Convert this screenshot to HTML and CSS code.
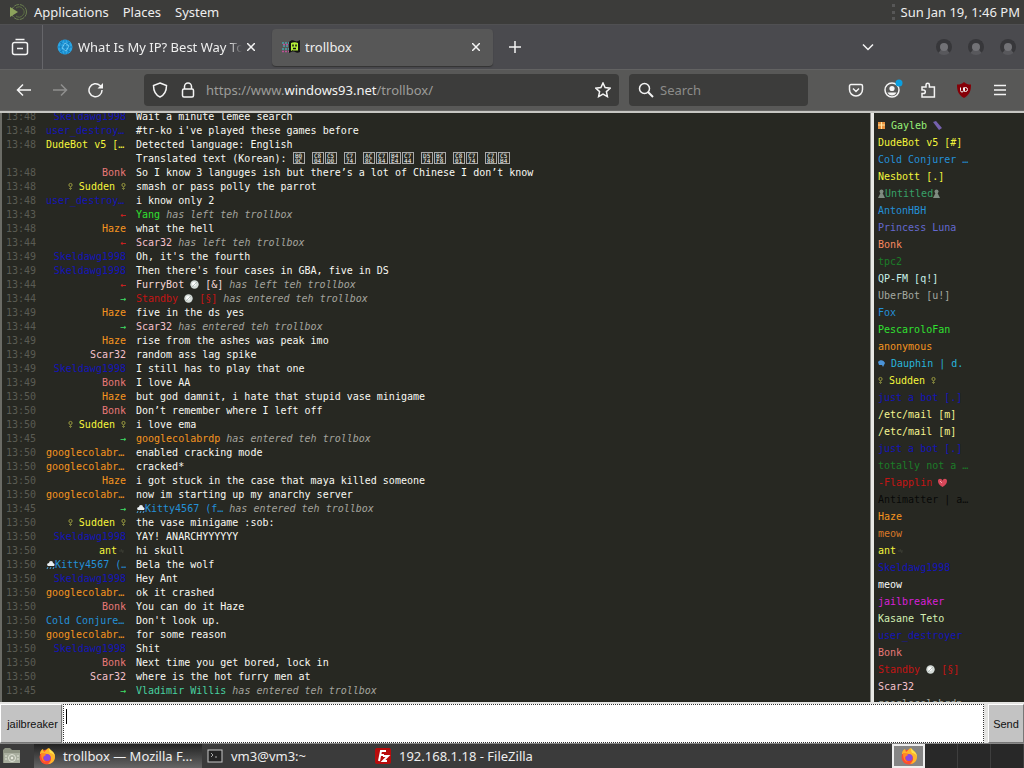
FILE: index.html
```html
<!DOCTYPE html>
<html lang="en">

<head>
    <meta charset="UTF-8">
    <meta name="viewport" content="width=device-width, initial-scale=1.0">
    <title>trollbox</title>
    <link rel="stylesheet" href="styles.css">
</head>

<body>
    <svg class="defs" width="0" height="0" aria-hidden="true">
        <symbol id="fox" viewBox="0 0 18 18">
            <circle cx="9" cy="10" r="7.5" fill="#ff4d2e" />
            <path d="M2 7C2 3 5 2 5 2l1 3c2-1 3-4 5-4 0 2 6 3 6 9 0 4-3 7-7 7 4-3 4-7 1-9-3-2-6-1-9-1z" fill="#ffb52b" />
            <path d="M11 1c1 2 6 4 6 9-1-3-3-4-5-4-1-2-1-3-1-5z" fill="#ffe14a" />
            <circle cx="9" cy="10.500" r="3.600" fill="#8a49e0" />
            <path d="M3 6c2 0 4 0 5 2-1 1-3 1-3 3 0 1 1 3 3 4-3 0-5-3-5-9z" fill="#ff8a24" />
        </symbol>
        <symbol id="disc" viewBox="0 0 9 9">
            <circle cx="4.500" cy="4.500" r="4.200" fill="#d5dcd8" />
            <circle cx="4" cy="4" r="2" fill="#fff" />
            <path d="M2 7l5-5" stroke="#a8b4ae" stroke-width=".8" />
        </symbol>
        <symbol id="cloud" viewBox="0 0 9 9">
            <path d="M1 5a2 2 0 0 1 2-2 2 2 0 0 1 4 0 2 2 0 0 1 1 3H2z" fill="#e8eef2" />
            <path d="M2 7l-1 2M5 7L4 9M8 7L7 9" stroke="#4aa4e0" />
        </symbol>
        <symbol id="flower" viewBox="0 0 5 9">
            <circle cx="2.500" cy="3" r="1.600" fill="none" stroke="#98983e" />
            <path d="M2.500 4.500V8M1 6.500h3" stroke="#777a3a" fill="none" />
        </symbol>
        <symbol id="bug" viewBox="0 0 9 9">
            <path d="M2 5h5M4 3l2 4" stroke="#3b3c33" />
        </symbol>
        <symbol id="pawn" viewBox="0 0 7 9">
            <circle cx="3.500" cy="2.500" r="2" fill="#7f8b80" />
            <path d="M3.500 2L7 9H0z" fill="#7f8b80" />
        </symbol>
    </svg>

    <nav class="panel">
        <svg class="panel-logo" viewBox="0 0 20 20">
            <circle cx="11" cy="10" r="7.500" fill="none" stroke="#6b7f50" stroke-dasharray="5 1" />
            <path d="M8 6a5 5 0 1 1 0 8" fill="none" stroke="#5c7042" />
            <path d="M2 5l8 5-8 5z" fill="#8da35c" />
        </svg>
        <a href="#">Applications</a>
        <a href="#">Places</a>
        <a href="#">System</a>
        <span class="grip"></span>
        <time>Sun Jan 19, 1:46 PM</time>
    </nav>

    <header class="tabs">
        <button class="view" aria-label="Firefox View">
            <svg viewBox="0 0 18 18"><path d="M4.500 1.500h9M1.500 8V6.500a2 2 0 0 1 2-2h11a2 2 0 0 1 2 2v8a2 2 0 0 1-2 2h-11a2 2 0 0 1-2-2zM6 10.500h6" /></svg>
        </button>
        <div class="tab">
            <svg class="favicon" viewBox="0 0 16 16">
                <circle cx="8" cy="8" r="7.500" fill="#2aa5e4" />
                <path d="M8 1v14M1 8h14M3 3c3 3 7 3 10 0M3 13c3-3 7-3 10 0M6 1c-3 4-3 10 0 14M10 1c3 4 3 10 0 14" fill="none" stroke="#1278b8" stroke-width=".9" />
                <path d="M8 4l4 3-3 5-4-3z" fill="none" stroke="#8fd8f8" stroke-width=".7" />
            </svg>
            <span class="tab-title faded">What Is My IP? Best Way To</span>
            <button class="close" aria-label="Close tab"><svg viewBox="0 0 8 8"><path d="M0 0l8 8M8 0L0 8" /></svg></button>
        </div>
        <div class="tab active">
            <svg class="favicon wide" viewBox="0 0 18 14">
                <path d="M0 3h7M1 6h6M0 9h7" stroke="#46a6ad" stroke-width="1.500" stroke-dasharray="2 1" />
                <path d="M1 4.500h6M0 11.500h7" stroke="#bd5095" stroke-dasharray="2 1" />
                <path d="M7 2c2-2 4-2 6-1s3 0 5-1v12c-2 1-3 1-5 0s-4 0-6 1z" fill="#111" />
                <path d="M9 3c2-1 5-1 7 0v8l-1-1-1 1-1-1-1 1-1-1-2 1z" fill="#b4ee38" />
                <path d="M11 4.500v2M14 4.500v2M11 8.500h3" stroke="#111" />
            </svg>
            <span class="tab-title">trollbox</span>
            <button class="close" aria-label="Close tab"><svg viewBox="0 0 8 8"><path d="M0 0l8 8M8 0L0 8" /></svg></button>
        </div>
        <button class="plus" aria-label="New tab"><svg viewBox="0 0 12 12"><path d="M6 0v12M0 6h12" /></svg></button>
        <button class="all-tabs" aria-label="List all tabs"><svg viewBox="0 0 12 8"><path d="M1 1.500l5 5 5-5" /></svg></button>
        <div class="window-buttons">
            <button aria-label="Minimize"></button>
            <button aria-label="Maximize"></button>
            <button aria-label="Close"></button>
        </div>
    </header>

    <div class="toolbar">
        <div class="nav-buttons">
            <button aria-label="Back"><svg viewBox="0 0 16 16"><path d="M15 8H2M7 2.500L1.500 8 7 13.500" /></svg></button>
            <button class="off" aria-label="Forward" disabled><svg viewBox="0 0 16 16"><path d="M1 8h13M9 2.500L14.500 8 9 13.500" /></svg></button>
            <button aria-label="Reload"><svg viewBox="0 0 16 16"><path d="M14 8a6.500 6.500 0 1 1-2-4.500l2 2" /><path d="M15 1v5.500H9.500z" fill="#f4f4f4" stroke="none" /></svg></button>
        </div>
        <div class="url">
            <svg viewBox="0 0 16 16"><path d="M8 1l6.500 2.500c0 5-1 9-6.500 11.500C2.500 12.500 1.500 8.500 1.500 3.500z" /></svg>
            <svg viewBox="0 0 16 16"><path d="M4.500 7V4.500a3.500 3.500 0 0 1 7 0V7" /><rect x="2.500" y="7" width="11" height="8" rx="1.500" /></svg>
            <a class="address" href="#">https://www.<b>windows93.net</b>/trollbox/</a>
            <svg viewBox="0 0 16 16"><path d="M8 1l2.100 4.600 5 .6-3.700 3.400 1 5L8 12.100l-4.400 2.500 1-5L.9 6.200l5-.6z" /></svg>
        </div>
        <label class="search">
            <svg viewBox="0 0 16 16"><circle cx="6.500" cy="6.500" r="5" /><path d="M10 10l5 5" stroke-width="2" /></svg>
            <input type="search" placeholder="Search" aria-label="Search">
        </label>
        <div class="extras">
            <button aria-label="Pocket"><svg viewBox="0 0 16 16"><path d="M3 2.500h10A1.500 1.500 0 0 1 14.500 4v3.500a6.500 6.500 0 0 1-13 0V4A1.500 1.500 0 0 1 3 2.500zM5 6.500l3 3 3-3" /></svg></button>
            <button aria-label="Account"><svg class="account" viewBox="0 0 16 16"><circle cx="8" cy="8" r="7" /><circle cx="8" cy="6.500" r="2.600" fill="#f4f4f4" stroke="none" /><path d="M3.500 10.500h9c-1 2-2.500 3-4.500 3s-3.500-1-4.500-3z" fill="#f4f4f4" stroke="none" /><circle cx="15" cy="1" r="3.500" fill="#0a9fe0" stroke="none" /></svg></button>
            <button aria-label="Extensions"><svg viewBox="0 0 16 16"><path d="M2 15v-3.500h1.500a1.800 1.800 0 0 0 0-3.600H2V5h4V3a1.700 1.700 0 0 1 3.400 0v2h5v10z" /></svg></button>
            <button aria-label="uBlock Origin"><svg viewBox="0 0 16 16"><path d="M8 0c2 2 4 2.500 7 2.500 0 6-1 10-7 13.500C2 12.500 1 8.500 1 2.500 4 2.500 6 2 8 0z" fill="#850008" stroke="none" /><path d="M4.500 5.500v3a1.200 1.200 0 0 0 3 0v-3M8.500 5.500v4h1a2 2 0 0 0 0-4z" stroke-width="1" /></svg></button>
            <button aria-label="Menu"><svg viewBox="0 0 16 16"><path d="M2 3.500h12M2 8h12M2 12.500h12" /></svg></button>
        </div>
    </div>

    <main class="trollbox">
        <section class="chat">
            <div class="row"><time>13:48</time><span class="nick blue">Skeldawg1998</span><p>Wait a minute lemee search</p></div>
            <div class="row"><time>13:48</time><span class="nick long blue">user_destroy…</span><p>#tr-ko i've played these games before</p></div>
            <div class="row"><time>13:48</time><span class="nick long yellow">DudeBot v5 […</span><p>Detected language: English<br>Translated text (Korean): <i class="tofu">B0 9C</i> <i class="tofu">C8 04</i><i class="tofu">C5 D0</i> <i class="tofu">C7 74</i> <i class="tofu">AC 8C</i><i class="tofu">C7 84</i><i class="tofu">B4 E4</i><i class="tofu">C7 44</i> <i class="tofu">D5 74</i><i class="tofu">BC F8</i> <i class="tofu">C8 01</i><i class="tofu">C7 74</i> <i class="tofu">C7 88</i><i class="tofu">C5 B4</i></p></div>
            <div class="row"><time>13:48</time><span class="nick salmon">Bonk</span><p>So I know 3 languges ish but there’s a lot of Chinese I don’t know</p></div>
            <div class="row"><time>13:48</time><span class="nick yellow"><svg class="emoji thin"><use href="#flower" /></svg> Sudden <svg class="emoji thin"><use href="#flower" /></svg></span><p>smash or pass polly the parrot</p></div>
            <div class="row"><time>13:48</time><span class="nick long blue">user_destroy…</span><p>i know only 2</p></div>
            <div class="row"><time>13:43</time><span class="nick left">←</span><p><span class="lime">Yang</span> <em>has left teh trollbox</em></p></div>
            <div class="row"><time>13:48</time><span class="nick orange">Haze</span><p>what the hell</p></div>
            <div class="row"><time>13:44</time><span class="nick left">←</span><p><span class="pink">Scar32</span> <em>has left teh trollbox</em></p></div>
            <div class="row"><time>13:49</time><span class="nick blue">Skeldawg1998</span><p>Oh, it's the fourth</p></div>
            <div class="row"><time>13:49</time><span class="nick blue">Skeldawg1998</span><p>Then there's four cases in GBA, five in DS</p></div>
            <div class="row"><time>13:44</time><span class="nick left">←</span><p><span class="blush">FurryBot <svg class="emoji"><use href="#disc" /></svg> [&amp;]</span> <em>has left teh trollbox</em></p></div>
            <div class="row"><time>13:44</time><span class="nick entered">→</span><p><span class="red">Standby <svg class="emoji"><use href="#disc" /></svg> [§]</span> <em>has entered teh trollbox</em></p></div>
            <div class="row"><time>13:49</time><span class="nick orange">Haze</span><p>five in the ds yes</p></div>
            <div class="row"><time>13:44</time><span class="nick entered">→</span><p><span class="pink">Scar32</span> <em>has entered teh trollbox</em></p></div>
            <div class="row"><time>13:49</time><span class="nick orange">Haze</span><p>rise from the ashes was peak imo</p></div>
            <div class="row"><time>13:49</time><span class="nick pink">Scar32</span><p>random ass lag spike</p></div>
            <div class="row"><time>13:49</time><span class="nick blue">Skeldawg1998</span><p>I still has to play that one</p></div>
            <div class="row"><time>13:49</time><span class="nick salmon">Bonk</span><p>I love AA</p></div>
            <div class="row"><time>13:50</time><span class="nick orange">Haze</span><p>but god damnit, i hate that stupid vase minigame</p></div>
            <div class="row"><time>13:50</time><span class="nick salmon">Bonk</span><p>Don’t remember where I left off</p></div>
            <div class="row"><time>13:50</time><span class="nick yellow"><svg class="emoji thin"><use href="#flower" /></svg> Sudden <svg class="emoji thin"><use href="#flower" /></svg></span><p>i love ema</p></div>
            <div class="row"><time>13:45</time><span class="nick entered">→</span><p><span class="orange">googlecolabrdp</span> <em>has entered teh trollbox</em></p></div>
            <div class="row"><time>13:50</time><span class="nick long orange">googlecolabr…</span><p>enabled cracking mode</p></div>
            <div class="row"><time>13:50</time><span class="nick long orange">googlecolabr…</span><p>cracked*</p></div>
            <div class="row"><time>13:50</time><span class="nick orange">Haze</span><p>i got stuck in the case that maya killed someone</p></div>
            <div class="row"><time>13:50</time><span class="nick long orange">googlecolabr…</span><p>now im starting up my anarchy server</p></div>
            <div class="row"><time>13:45</time><span class="nick entered">→</span><p><span class="sky"><svg class="emoji"><use href="#cloud" /></svg>Kitty4567 (f…</span> <em>has entered teh trollbox</em></p></div>
            <div class="row"><time>13:50</time><span class="nick yellow"><svg class="emoji thin"><use href="#flower" /></svg> Sudden <svg class="emoji thin"><use href="#flower" /></svg></span><p>the vase minigame :sob:</p></div>
            <div class="row"><time>13:50</time><span class="nick blue">Skeldawg1998</span><p>YAY! ANARCHYYYYYY</p></div>
            <div class="row"><time>13:50</time><span class="nick yellow">ant<svg class="emoji"><use href="#bug" /></svg></span><p>hi skull</p></div>
            <div class="row"><time>13:50</time><span class="nick long sky"><svg class="emoji"><use href="#cloud" /></svg>Kitty4567 (…</span><p>Bela the wolf</p></div>
            <div class="row"><time>13:50</time><span class="nick blue">Skeldawg1998</span><p>Hey Ant</p></div>
            <div class="row"><time>13:50</time><span class="nick long orange">googlecolabr…</span><p>ok it crashed</p></div>
            <div class="row"><time>13:50</time><span class="nick salmon">Bonk</span><p>You can do it Haze</p></div>
            <div class="row"><time>13:50</time><span class="nick long sky">Cold Conjure…</span><p>Don't look up.</p></div>
            <div class="row"><time>13:50</time><span class="nick long orange">googlecolabr…</span><p>for some reason</p></div>
            <div class="row"><time>13:50</time><span class="nick blue">Skeldawg1998</span><p>Shit</p></div>
            <div class="row"><time>13:50</time><span class="nick salmon">Bonk</span><p>Next time you get bored, lock in</p></div>
            <div class="row"><time>13:50</time><span class="nick pink">Scar32</span><p>where is the hot furry men at</p></div>
            <div class="row"><time>13:45</time><span class="nick entered">→</span><p><span class="mint">Vladimir Willis</span> <em>has entered teh trollbox</em></p></div>
        </section>
        <ul class="users">
            <li class="lightgreen"><svg class="emoji small" viewBox="0 0 7 9"><rect y="1" width="7" height="7" fill="#e6913e" /><path d="M0 4h7M3.500 1v7" stroke="#ffe3a0" /></svg> Gayleb <svg class="emoji" viewBox="0 0 9 9"><path d="M0 1l3-1 6 7-3 2z" fill="#7561ad" /></svg></li>
            <li class="yellow">DudeBot v5 [#]</li>
            <li class="sky">Cold Conjurer …</li>
            <li class="yellow">Nesbott [.]</li>
            <li class="sea"><svg class="emoji small"><use href="#pawn" /></svg>Untitled<svg class="emoji small"><use href="#pawn" /></svg></li>
            <li class="sky">AntonHBH</li>
            <li class="violet">Princess Luna</li>
            <li class="coral">Bonk</li>
            <li class="green">tpc2</li>
            <li class="ice">QP-FM [q!]</li>
            <li class="gray">UberBot [u!]</li>
            <li class="sky">Fox</li>
            <li class="lime">PescaroloFan</li>
            <li class="orange">anonymous</li>
            <li class="cyan"><svg class="emoji small" viewBox="0 0 7 9"><path d="M0 3c2-3 6-2 7 1L5 8 4 6H1z" fill="#4b94d8" /></svg> Dauphin | d.</li>
            <li class="yellow"><svg class="emoji thin"><use href="#flower" /></svg> Sudden <svg class="emoji thin"><use href="#flower" /></svg></li>
            <li class="blue">just a bot [.]</li>
            <li class="cream">/etc/mail [m]</li>
            <li class="cream">/etc/mail [m]</li>
            <li class="blue">just a bot [.]</li>
            <li class="green">totally not a …</li>
            <li class="red">-Flapplin <svg class="emoji" viewBox="0 0 9 9"><path d="M4.500 9C1 7 0 5 0 3c0-3 4-3 4.500 0C5 0 9 0 9 3c0 2-1 4-4.500 6z" fill="#d8485a" /><path d="M2 3l2 2" stroke="#f5a5ad" /></svg></li>
            <li class="black">Antimatter | a…</li>
            <li class="orange">Haze</li>
            <li class="rust">meow</li>
            <li class="yellow">ant<svg class="emoji"><use href="#bug" /></svg></li>
            <li class="blue">Skeldawg1998</li>
            <li class="white">meow</li>
            <li class="magenta">jailbreaker</li>
            <li class="pale">Kasane Teto</li>
            <li class="blue">user_destroyer</li>
            <li class="salmon">Bonk</li>
            <li class="red">Standby <svg class="emoji"><use href="#disc" /></svg> [§]</li>
            <li class="pink">Scar32</li>
            <li class="gray">googlecolabrdp</li>
        </ul>
    </main>

    <form class="compose">
        <button type="button" class="name">jailbreaker</button>
        <textarea aria-label="Message"></textarea>
        <button type="button" class="send">Send</button>
    </form>

    <footer class="taskbar">
        <button class="desk" aria-label="Show desktop">
            <svg viewBox="0 0 20 18"><path d="M1 3l2-2h5l2 2h8v13H1z" fill="#8e9383" /><path d="M2 6h16v10H2z" fill="#a9ae9f" /><circle cx="10" cy="11" r="3.500" fill="none" stroke="#dfe2d6" /><path d="M4 8v6M16 8v6" stroke="#dfe2d6" stroke-dasharray="2 1" /><circle cx="10" cy="11" r="1.200" fill="#e8eadf" /></svg>
        </button>
        <button class="task current"><svg><use href="#fox" /></svg><span>trollbox — Mozilla F...</span></button>
        <button class="task"><svg viewBox="0 0 18 18"><rect x="2" y="3" width="14" height="12" fill="#232323" stroke="#c8c8c8" /><path d="M5 6l2 2-2 2M9 10h2" fill="none" stroke="#aaa" /></svg><span>vm3@vm3:~</span></button>
        <button class="task"><svg viewBox="0 0 18 18"><rect x="1" y="1" width="16" height="16" rx="2" fill="#b80c0c" /><path d="M5 14L7 4h5M6 8h4M9 9h5l-5 5h4" fill="none" stroke="#fff" stroke-width="2" /></svg><span>192.168.1.18 - FileZilla</span></button>
        <div class="pager">
            <button class="on" aria-label="Workspace 1"><svg><use href="#fox" /></svg></button>
            <button aria-label="Workspace 2"></button>
            <button aria-label="Workspace 3"></button>
            <button aria-label="Workspace 4"></button>
        </div>
    </footer>
</body>

</html>
```

FILE: styles.css
```css
* {
    box-sizing: border-box;
}

body {
    margin: 0;
    height: 100vh;
    display: flex;
    flex-direction: column;
    overflow: hidden;
    background: #3c3c3b;
    color: #eee;
    font: 13px/24px "Noto Sans", sans-serif;
}

button {
    display: flex;
    align-items: center;
    justify-content: center;
    padding: 0;
    border: 0;
    background: none;
    color: inherit;
    font: inherit;
}

a {
    color: inherit;
    text-decoration: none;
}

svg {
    flex: none;
}

.defs {
    position: absolute;
}

/* top panel */
.panel {
    flex: none;
    height: 24px;
    display: flex;
    align-items: center;
    gap: 14px;
    padding: 0 4px 0 8px;
    background: #3c3c3a;
}

.panel-logo {
    width: 20px;
    height: 20px;
    margin-right: -8px;
}

.grip {
    margin-left: auto;
    margin-right: -8px;
    height: 16px;
    border-left: 3px dotted #575757;
}

/* tabs */
.tabs {
    flex: none;
    height: 45px;
    display: flex;
    align-items: center;
    background: #4a4a4e;
    border-top: 1px solid #505052;
}

.tabs svg,
.toolbar svg {
    fill: none;
    stroke: #f4f4f4;
    stroke-width: 1.5;
}

.tabs .favicon {
    width: 16px;
    height: 16px;
    stroke: none;
}

.tabs .favicon.wide {
    width: 18px;
}

.view {
    width: 43px;
    height: 100%;
    padding-right: 3px;
    border-right: 1px solid #66666a;
}

.view svg {
    width: 18px;
    height: 18px;
}

.tab {
    width: 221px;
    height: 37px;
    display: flex;
    align-items: center;
    gap: 5px;
    padding: 0 13px 0 10px;
    margin-left: 4px;
    border-radius: 4px;
}

.tab.active {
    background: #575757;
    box-shadow: 0 1px 1px #333;
}

.tab-title {
    flex: 1;
    white-space: nowrap;
    overflow: hidden;
}

.tab-title.faded {
    mask-image: linear-gradient(to right, #000 92%, transparent);
}

.close {
    width: 8px;
    height: 20px;
}

.close svg {
    width: 8px;
    height: 8px;
}

.plus {
    width: 34px;
    margin-left: 5px;
}

.plus svg {
    width: 12px;
    height: 12px;
}

.all-tabs {
    margin-left: auto;
    margin-right: 62px;
}

.all-tabs svg {
    width: 12px;
    height: 8px;
}

.window-buttons {
    display: flex;
    gap: 16px;
    padding-right: 8px;
}

.window-buttons button {
    width: 16px;
    height: 16px;
    border: 4px solid #37373a;
    border-bottom-color: #58585c;
    border-radius: 50%;
    background: #727276;
}

/* address bar */
.toolbar {
    flex: none;
    height: 42px;
    display: flex;
    align-items: center;
    background: #585857;
    border-top: 1px solid #626262;
    border-bottom: 1px solid #676765;
}

.toolbar svg {
    width: 16px;
    height: 16px;
}

.nav-buttons {
    display: flex;
    gap: 20px;
    padding: 0 40px 0 16px;
}

.off {
    opacity: .35;
}

.url {
    flex: 1;
    height: 32px;
    display: flex;
    align-items: center;
    gap: 12px;
    padding: 0 8px;
    margin-right: 10px;
    background: #3c3c3b;
    border-radius: 4px;
}

.address {
    flex: 1;
    margin-left: -2px;
    color: #9c9c9a;
}

.address b {
    color: #f2f2f2;
    font-weight: normal;
}

.search {
    width: 179px;
    height: 32px;
    display: flex;
    align-items: center;
    gap: 6px;
    padding: 0 9px;
    background: #3c3c3b;
    border-radius: 4px;
}

.search input {
    width: 100%;
    padding: 0;
    border: 0;
    outline: 0;
    background: none;
    color: #eee;
    font: inherit;
}

.search input::placeholder {
    color: #8c8c8a;
}

.extras {
    display: flex;
    gap: 20px;
    padding: 0 16px 0 40px;
}

.toolbar .account {
    overflow: visible;
}

/* chat */
.trollbox {
    flex: 1;
    min-height: 0;
    display: grid;
    grid-template-columns: 1fr 150px;
    gap: 4px;
    border-top: 2px solid #c6c6c2;
    background: linear-gradient(to right, #8c8c88 1px, #e8e8e4 1px) right / 154px no-repeat;
    font: 10px/14px "DejaVu Sans Mono", monospace;
}

.chat,
.users {
    min-height: 0;
    overflow: hidden;
    background: #272822;
}

.chat {
    display: flex;
    flex-direction: column;
    justify-content: flex-end;
    padding: 0 4px 4px;
    border-left: 2px solid #6b6c66;
}

.row {
    flex: none;
    display: grid;
    grid-template-columns: 40px 80px 1fr;
}

.row time {
    color: #5a5b53;
}

.row p {
    margin: 0 0 0 10px;
    color: #f8f8f2;
}

.row em {
    color: #a3a39d;
}

.nick {
    text-align: right;
    white-space: nowrap;
    overflow: hidden;
}

.nick.long {
    text-align: left;
}

.users {
    margin: 0;
    padding: 4px;
    list-style: none;
    line-height: 17px;
    white-space: nowrap;
}

.emoji {
    width: 9px;
    height: 9px;
    vertical-align: -1px;
}

.emoji.small {
    width: 7px;
}

.emoji.thin {
    width: 5px;
}

.tofu {
    display: inline-block;
    width: 12px;
    height: 12px;
    margin-right: 1px;
    padding: 0 1px;
    border: 1px solid #aaa;
    font: 6px/5px "DejaVu Sans Mono", monospace;
    text-align: center;
    vertical-align: top;
    overflow: hidden;
}

.blue { color: #1414b8; }
.yellow { color: #f4f43c; }
.salmon { color: #e87878; }
.coral { color: #f88860; }
.orange { color: #f49420; }
.rust { color: #d87828; }
.pink { color: #f4c0cc; }
.blush { color: #f8d8d8; }
.red { color: #c41414; }
.left { color: #e02020; }
.entered { color: #40e068; }
.lime { color: #30e030; }
.lightgreen { color: #98f078; }
.green { color: #1c7c28; }
.sea { color: #38a068; }
.mint { color: #48d0a0; }
.sky { color: #2490d8; }
.cyan { color: #28b4dc; }
.ice { color: #c8f0e8; }
.violet { color: #6468d0; }
.magenta { color: #d820d8; }
.gray { color: #a4a8a0; }
.cream { color: #f4f490; }
.pale { color: #d4f0b4; }
.white { color: #f8f8f8; }
.black { color: #080808; }

/* message box */
.compose {
    flex: none;
    height: 42px;
    display: flex;
    gap: 1px;
    padding-top: 2px;
    background: #e4e4e2;
    border-bottom: 1px solid #888;
}

.compose button {
    background: #c3c3c3;
    border: 1px solid;
    border-color: #fff #777 #777 #fff;
    color: #111;
    font: 11px "Liberation Sans", sans-serif;
}

.compose .name {
    width: 62px;
    padding-left: 3px;
}

.compose .send {
    width: 36px;
}

.compose textarea {
    flex: 1;
    margin-right: 3px;
    padding: 2px;
    border: 1px dotted #333;
    outline: 0;
    resize: none;
    background: linear-gradient(#000, #000) 2px 4px / 1px 15px no-repeat #fff;
    color: #000;
    font: 14px "Liberation Sans", sans-serif;
}

/* taskbar */
.taskbar {
    flex: none;
    height: 24px;
    display: flex;
    align-items: center;
    background: #3b3b3b;
}

.taskbar svg {
    width: 18px;
    height: 18px;
}

.desk {
    width: 24px;
    margin-right: 10px;
}

.desk svg {
    width: 20px;
}

.task {
    width: 168px;
    height: 24px;
    justify-content: flex-start;
    gap: 7px;
    padding: 0 4px;
    white-space: nowrap;
}

.task.current {
    background: linear-gradient(#222, #666);
}

.pager {
    display: flex;
    height: 24px;
    margin-left: auto;
    background: #282828;
}

.pager button {
    width: 33px;
    border-right: 1px solid #3e3e3e;
}

.pager .on {
    background: #858585;
    border: 2px solid #eee;
}
```
